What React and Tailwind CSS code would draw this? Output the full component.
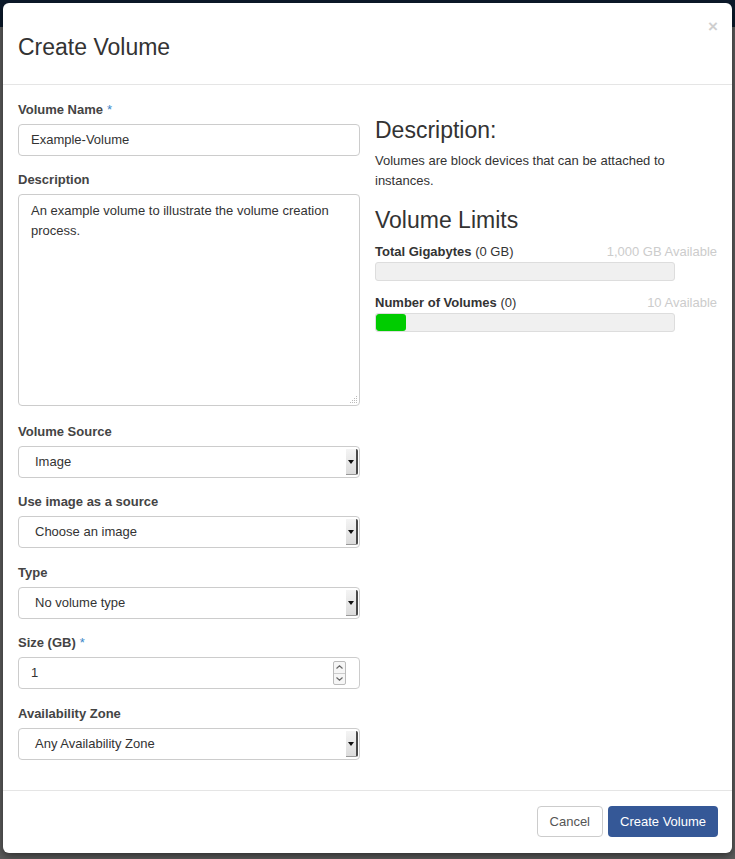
import React from 'react';

const font = { fontFamily: '"Liberation Sans", Arial, sans-serif' };

function Label({ children, required }) {
    return (
        <div className="text-[13px] leading-[19px] font-bold text-[#444] mb-[5px]">
            {children}
            {required && <span className="text-[#3a87c8] ml-[4px] font-normal">*</span>}
        </div>
    );
}

function SelectBox({ value }) {
    return (
        <div className="relative h-[32px] border border-[#ccc] rounded-[4px] bg-white flex items-center pl-[16px] text-[13px] text-[#333]">
            {value}
            <div className="absolute right-[1px] top-[2px] bottom-[2px] w-[12px] bg-gradient-to-b from-[#f4f4f4] to-[#dcdcdc] border-r-2 border-[#4a4a4a] border-b border-b-[#999] rounded-r-[2px] flex items-center justify-center">
                <div className="w-0 h-0 border-l-[3px] border-r-[3px] border-t-[4px] border-l-transparent border-r-transparent border-t-[#111]"></div>
            </div>
        </div>
    );
}

function Bar({ label, value, available, fill }) {
    return (
        <div>
            <div className="flex justify-between text-[13px] leading-[18px]">
                <span className="text-[#333]">
                    <span className="font-bold">{label}</span> {value}
                </span>
                <span className="text-[#ccc]">{available}</span>
            </div>
            <div className="mt-[1px] w-[300px] h-[19px] bg-[#f0f0f0] border border-[#ddd] rounded-[3px] overflow-hidden">
                {fill > 0 && <div className="h-full bg-[#00cc00] rounded-[3px]" style={{ width: fill }}></div>}
            </div>
        </div>
    );
}

export default function App() {
    return (
        <div
            className="w-[735px] h-[859px] pt-[3px] pl-[3px] bg-[linear-gradient(to_bottom,#0c1a2c_27px,#5c5c5c_27px)]"
            style={font}
        >
            <div className="w-[729px] h-[850px] bg-white rounded-[6px] shadow-[0_3px_9px_rgba(0,0,0,0.5)] flex flex-col">
                {/* Header */}
                <div className="relative h-[82px] border-b border-[#e5e5e5] px-[15px] pt-[30px]">
                    <h3 className="text-[23px] leading-[28px] text-[#333]">Create Volume</h3>
                    <div className="absolute right-[14px] top-[14px] text-[17px] leading-[20px] font-bold text-[#cfcfcf]">×</div>
                </div>

                {/* Body */}
                <div className="grid grid-cols-2 gap-[15px] px-[15px] pt-[15px] flex-1">
                    <div>
                        <div className="mb-[14px]">
                            <Label required>Volume Name</Label>
                            <div className="h-[32px] border border-[#ccc] rounded-[4px] flex items-center pl-[12px] text-[13px] text-[#333]">
                                Example-Volume
                            </div>
                        </div>
                        <div className="mb-[16px]">
                            <Label>Description</Label>
                            <div className="relative h-[212px] border border-[#ccc] rounded-[4px] px-[12px] pt-[6px] text-[13px] leading-[20px] text-[#333]">
                                An example volume to illustrate the volume creation process.
                                <svg className="absolute right-[1px] bottom-[1px]" width="9" height="9" viewBox="0 0 9 9">
                                    <g fill="#bbb">
                                        <rect x="7" y="1" width="1" height="1" />
                                        <rect x="5" y="3" width="1" height="1" />
                                        <rect x="7" y="3" width="1" height="1" />
                                        <rect x="3" y="5" width="1" height="1" />
                                        <rect x="5" y="5" width="1" height="1" />
                                        <rect x="7" y="5" width="1" height="1" />
                                        <rect x="1" y="7" width="1" height="1" />
                                        <rect x="3" y="7" width="1" height="1" />
                                        <rect x="5" y="7" width="1" height="1" />
                                        <rect x="7" y="7" width="1" height="1" />
                                    </g>
                                </svg>
                            </div>
                        </div>
                        <div className="mb-[14px]">
                            <Label>Volume Source</Label>
                            <SelectBox value="Image" />
                        </div>
                        <div className="mb-[15px]">
                            <Label>Use image as a source</Label>
                            <SelectBox value="Choose an image" />
                        </div>
                        <div className="mb-[14px]">
                            <Label>Type</Label>
                            <SelectBox value="No volume type" />
                        </div>
                        <div className="mb-[15px]">
                            <Label required>Size (GB)</Label>
                            <div className="relative h-[32px] border border-[#ccc] rounded-[4px] flex items-center pl-[12px] text-[13px] text-[#333]">
                                1
                                <div className="absolute right-[13px] top-[3px] w-[13px] h-[24px] border border-[#bbb] rounded-[2px] bg-[#f6f6f6] flex flex-col">
                                    <div className="flex-1 flex items-center justify-center border-b border-[#ccc]">
                                        <svg width="7" height="4" viewBox="0 0 7 4"><path d="M0.5 3.5 L3.5 0.8 L6.5 3.5" fill="none" stroke="#666" strokeWidth="1.2" /></svg>
                                    </div>
                                    <div className="flex-1 flex items-center justify-center">
                                        <svg width="7" height="4" viewBox="0 0 7 4"><path d="M0.5 0.5 L3.5 3.2 L6.5 0.5" fill="none" stroke="#666" strokeWidth="1.2" /></svg>
                                    </div>
                                </div>
                            </div>
                        </div>
                        <div>
                            <Label>Availability Zone</Label>
                            <SelectBox value="Any Availability Zone" />
                        </div>
                    </div>

                    <div>
                        <h3 className="mt-[17px] text-[23px] leading-[26px] text-[#333]">Description:</h3>
                        <p className="mt-[8px] text-[13px] leading-[20px] text-[#333] pr-[30px]">
                            Volumes are block devices that can be attached to instances.
                        </p>
                        <h3 className="mt-[16px] text-[23px] leading-[26px] text-[#333]">Volume Limits</h3>
                        <div className="mt-[10px]">
                            <Bar label="Total Gigabytes" value="(0 GB)" available="1,000 GB Available" fill={0} />
                        </div>
                        <div className="mt-[13px]">
                            <Bar label="Number of Volumes" value="(0)" available="10 Available" fill={30} />
                        </div>
                    </div>
                </div>

                {/* Footer */}
                <div className="border-t border-[#e5e5e5] px-[14px] pt-[15px] pb-[16px] flex justify-end gap-[5px]">
                    <div className="h-[31px] px-[12px] flex items-center border border-[#ccc] rounded-[4px] text-[13px] text-[#555] bg-white">
                        Cancel
                    </div>
                    <div className="h-[31px] px-[12px] flex items-center rounded-[4px] text-[13px] text-white bg-[#355897]">
                        Create Volume
                    </div>
                </div>
            </div>
        </div>
    );
}
